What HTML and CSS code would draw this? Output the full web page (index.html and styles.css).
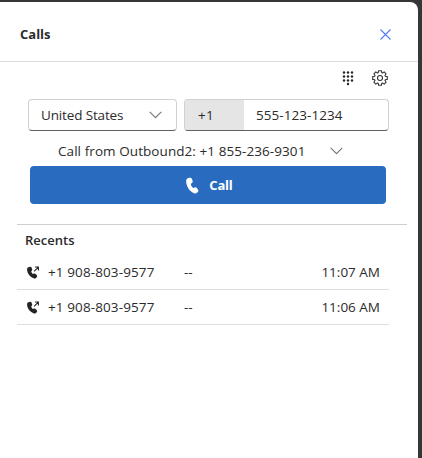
FILE: index.html
```html
<!DOCTYPE html>
<html lang="en">
<head>
<meta charset="utf-8">
<title>Calls</title>
<link rel="stylesheet" href="styles.css">
</head>
<body>
<main class="panel">
  <header class="header">
    <h1 class="title">Calls</h1>
    <button class="icon-button" aria-label="Close"><svg width="11" height="11" viewBox="0 0 11 11"><path d="M.5.5l10 10M10.500.5l-10 10" fill="none" stroke="#4f7cf3" stroke-width="1.1"/></svg></button>
  </header>
  <div class="tools">
    <button class="icon-button" aria-label="Dial pad"><svg width="12" height="16" viewBox="0 0 12 16" fill="#242424"><circle cx="2" cy="2.500" r="1.200"/><circle cx="6" cy="2.500" r="1.200"/><circle cx="10" cy="2.500" r="1.200"/><circle cx="2" cy="6.500" r="1.200"/><circle cx="6" cy="6.500" r="1.200"/><circle cx="10" cy="6.500" r="1.200"/><circle cx="2" cy="10.500" r="1.200"/><circle cx="6" cy="10.500" r="1.200"/><circle cx="10" cy="10.500" r="1.200"/><circle cx="6" cy="14" r="1.200"/></svg></button>
    <button class="icon-button" aria-label="Settings"><svg width="16" height="16" viewBox="0 0 16 16" fill="none" stroke="#333" stroke-width="1.100" stroke-linejoin="round"><path d="M6.600.7h2.800l.4 2 .7.300L12.200 1.900l1.900 1.900L13 5.500l.3.700 2 .4v2.800l-2 .4-.3.700 1.100 1.700-1.900 1.900-1.700-1.100-.7.300-.4 2H6.600l-.4-2-.7-.3-1.700 1.100-1.900-1.900L3 10.500l-.3-.7-2-.4V6.600l2-.4.300-.7-1.100-1.700 1.900-1.900L5.500 3l.7-.3z"/><circle cx="8" cy="8" r="2.500"/></svg></button>
  </div>
  <form class="dialer">
    <div class="fields">
      <div class="field country"><span class="t-country">United States</span><svg class="chevron" width="13" height="8" viewBox="0 0 13 8"><path d="M.7.8l5.800 5.900L12.300.8"/></svg></div>
      <div class="field phone"><span class="prefix">+1</span><span class="number">555-123-1234</span></div>
    </div>
    <div class="caller"><span class="t-caller">Call from Outbound2: +1 855-236-9301</span><svg class="chevron" width="13" height="8" viewBox="0 0 13 8"><path d="M.7.8l5.800 5.900L12.300.8"/></svg></div>
    <button type="button" class="call"><svg width="13" height="17" viewBox="0 0 14 18" fill="#fff"><path d="M2.300 1 4 .6C5.100.4 6 .9 6.400 1.900L7.100 3.800C7.400 4.600 7.200 5.500 6.500 6.100L5.200 7.300C5.400 8.900 6.500 10.700 7.800 11.700L9.500 11.100C10.300 10.800 11.200 11.100 11.700 11.800L12.900 13.500C13.500 14.300 13.400 15.300 12.700 16L11.800 16.900C10.900 17.700 9.700 17.900 8.600 17.400C3.200 15.100.1 9.500.2 4C.3 2.400 1 1.400 2.300 1z"/></svg><span class="t-call">Call</span></button>
  </form>
  <section class="recents">
    <h2 class="subtitle">Recents</h2>
    <ul class="list">
      <li class="row"><svg class="out" width="12" height="13" viewBox="0 0 12 13"><path fill="#242424" d="M1.300 1.200 2.500.9C3.500.6 4.300 1 4.600 1.800L5.100 3C5.400 3.700 5.200 4.400 4.700 4.900L4.100 5.500C4.400 6.500 5 7.300 5.800 7.900L7 7.600C7.700 7.400 8.400 7.600 8.900 8.200L9.800 9.300C10.300 9.900 10.300 10.700 9.700 11.200L9 11.900C8.300 12.500 7.300 12.600 6.500 12.200C2.700 10.700.3 7.300.1 3.700C0 2.500.4 1.500 1.300 1.200z"/><path fill="none" stroke="#242424" stroke-width="1.100" d="M7.100 5.300l4-4M8 1h3.400v3.400"/></svg><span class="contact">+1 908-803-9577</span><span class="name">--</span><time class="time">11:07 AM</time></li>
      <li class="row"><svg class="out" width="12" height="13" viewBox="0 0 12 13"><path fill="#242424" d="M1.300 1.200 2.500.9C3.500.6 4.300 1 4.600 1.800L5.100 3C5.400 3.700 5.200 4.400 4.700 4.900L4.100 5.500C4.400 6.500 5 7.300 5.800 7.900L7 7.600C7.700 7.400 8.400 7.600 8.900 8.200L9.800 9.300C10.300 9.900 10.300 10.700 9.700 11.200L9 11.900C8.300 12.500 7.300 12.600 6.500 12.200C2.700 10.700.3 7.300.1 3.700C0 2.500.4 1.500 1.300 1.200z"/><path fill="none" stroke="#242424" stroke-width="1.100" d="M7.100 5.300l4-4M8 1h3.400v3.400"/></svg><span class="contact">+1 908-803-9577</span><span class="name">--</span><time class="time">11:06 AM</time></li>
    </ul>
  </section>
</main>
</body>
</html>
```
FILE: styles.css
```css
* { box-sizing: border-box; }
body {
  margin: 0;
  padding: 2px 4px 0 0;
  height: 458px;
  overflow: hidden;
  background: #373636;
  color: #2b2b2b;
  font: 13.5px/20px "Open Sans", "Noto Sans", sans-serif;
}
.panel { height: 456px; background: #fff; border-top-right-radius: 8px; }
.header {
  display: flex;
  align-items: center;
  justify-content: space-between;
  height: 60px;
  padding: 5px 27px 0 20px;
  border-bottom: 1px solid #dcdcdc;
}
.title, .subtitle { margin: 0; font-size: 13px; line-height: 20px; }
.title { font-weight: 700; }
.icon-button { display: flex; padding: 0; border: 0; background: none; }
.tools {
  display: flex;
  align-items: center;
  justify-content: flex-end;
  gap: 18px;
  height: 32px;
  padding-right: 30px;
}
.dialer { padding: 5px 29px 0 28px; }
.fields { display: flex; gap: 7px; height: 32px; }
.field {
  display: flex;
  align-items: center;
  border: 1px solid #d1d1d1;
  border-bottom-color: #616161;
  border-radius: 4px;
  overflow: hidden;
}
.country { width: 149px; justify-content: space-between; padding: 0 14px 0 12px; }
.t-country { letter-spacing: -0.15px; }
.phone { width: 205px; }
.prefix { display: flex; align-items: center; width: 59px; height: 100%; padding-left: 13px; background: #e5e5e5; letter-spacing: 0.3px; }
.number { padding-left: 12px; letter-spacing: 0.06px; }
.chevron { fill: none; stroke: #777; stroke-width: 1.1; }
.caller { display: flex; align-items: center; justify-content: space-between; height: 35px; padding: 5px 46px 0 30px; }
.t-caller { letter-spacing: 0.07px; }
.call {
  display: flex;
  align-items: center;
  justify-content: center;
  gap: 10px;
  width: 356px;
  height: 38px;
  margin-left: 2px;
  padding: 0 0 0 3px;
  border: 0;
  border-radius: 4px;
  background: #296bbf;
  color: #fff;
  font: 700 13px/20px "Open Sans", sans-serif;
}
.t-call { letter-spacing: -0.2px; }
.recents { width: 390px; margin: 20px 0 0 17px; padding-top: 5px; border-top: 1px solid #cecece; }
.subtitle { padding-left: 8px; font-weight: 600; }
.list { width: 372px; margin: 5px 0 0; padding: 0; list-style: none; }
.row {
  display: grid;
  grid-template-columns: 21px 136px 1fr auto;
  align-items: center;
  height: 35px;
  padding: 0 9px 0 10px;
  border-bottom: 1px solid #dedede;
}
.contact { letter-spacing: 0.11px; }
```
